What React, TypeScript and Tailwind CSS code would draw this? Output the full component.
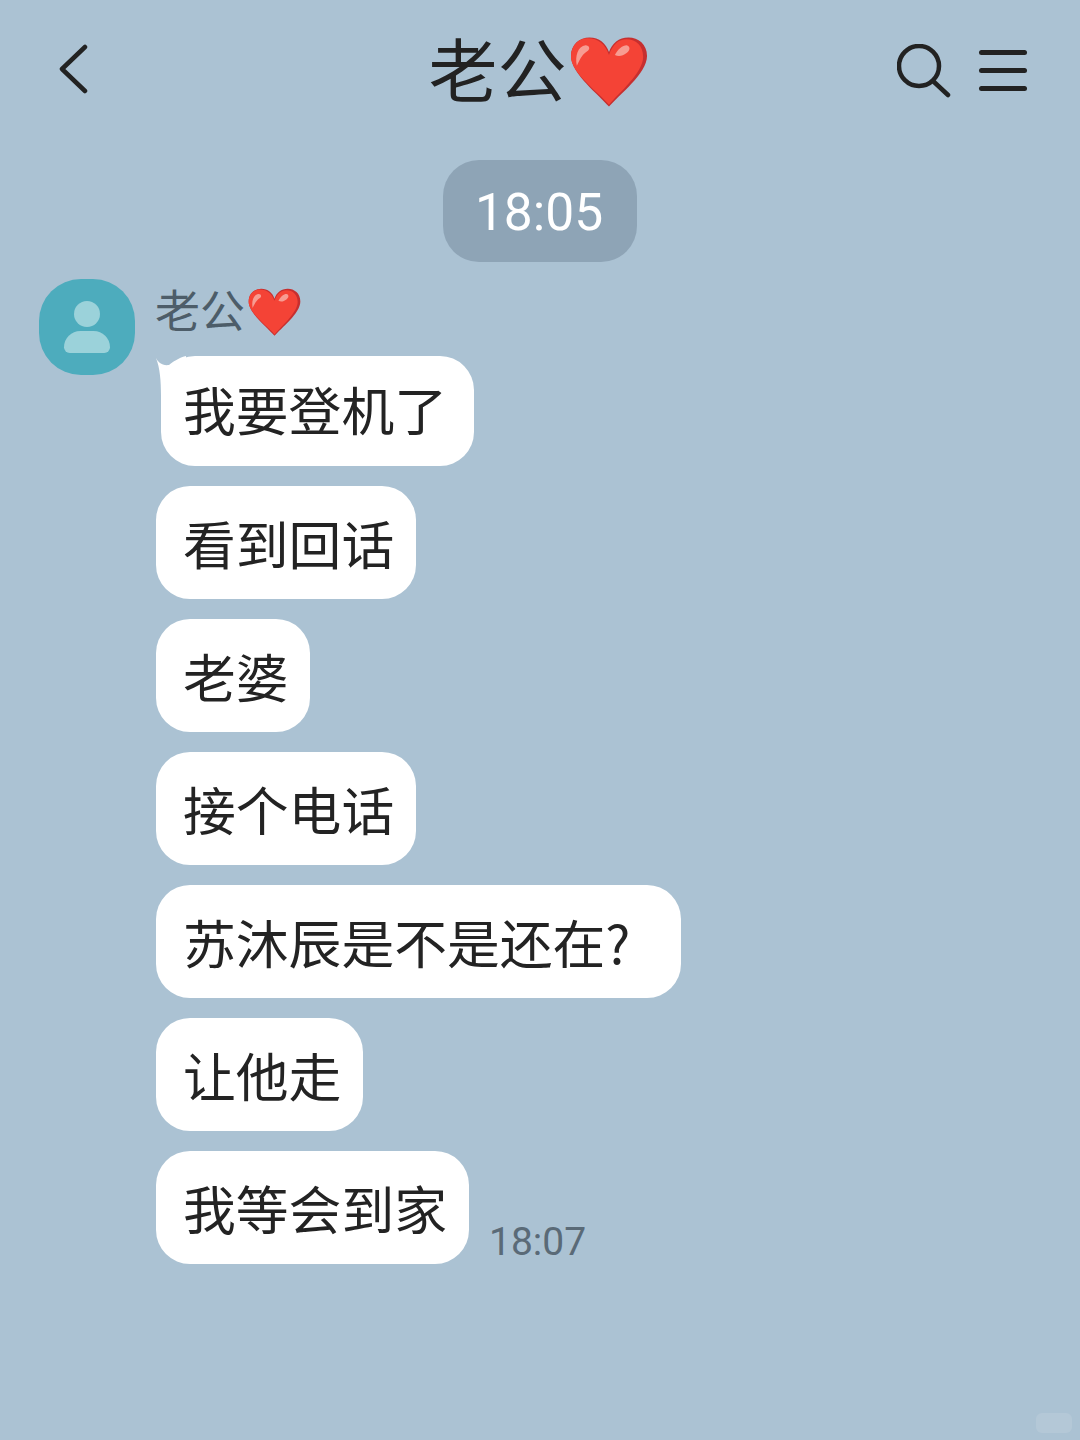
const font = "[font-family:'Noto_Sans_CJK_SC','Noto_Sans',sans-serif]";

function Heart({ className }: { className: string }) {
  return (
    <svg viewBox="0 0 80 72" className={className}>
      <path d="M40 72C30 60 1 38 1 20C1 8 10 1 20 1C30 1 37 7 40 16C43 7 50 1 60 1C70 1 79 8 79 20C79 38 50 60 40 72Z" fill="#c62f2f" />
      <path d="M40 70C30 58 1 37 1 21C1 9 9 2 18 2C29 2 36 8 40 19C44 8 50 3 58 3C68 3 75 10 75 21C75 37 50 58 40 70Z" fill="#f44336" />
      <path d="M7 30C5 20 8 10 16 9C20 9 21 13 18 15C13 18 11 22 7 30Z" fill="#f79c92" />
      <path d="M46 19C49 13 54 9 58 9C62 10 62 14 58 17C54 20 50 21 46 19Z" fill="#f79c92" />
    </svg>
  );
}

const rows: [string, string][] = [
  ["看到回话", "w-[260px]"],
  ["老婆", "w-[154px]"],
  ["接个电话", "w-[260px]"],
  ["苏沐辰是不是还在?", "w-[525px]"],
  ["让他走", "w-[207px]"],
];

function Bubble({ text, width }: { text: string; width: string }) {
  return (
    <div className={`${width} h-[113px] shrink-0 rounded-[34px] bg-white pl-[27px] flex items-center text-[52.8px] leading-none text-[#232323] whitespace-nowrap`}>
      {text}
    </div>
  );
}

export default function App() {
  return (
    <div className={`${font} relative w-[1080px] h-[1440px] overflow-hidden bg-[#abc2d3]`}>
      <header className="grid grid-cols-[1fr_auto_1fr] items-center h-[140px] pl-[59px] pr-[53px]">
        <svg viewBox="0 0 30 50" className="w-[30px] h-[50px] mt-[-3px]" fill="none" stroke="#222" strokeWidth="4.5" strokeLinecap="round" strokeLinejoin="round">
          <path d="M26 3L3 25L26 47" />
        </svg>
        <div className="flex items-center mt-[-6px] ml-[-10px]">
          <span className="text-[69px] leading-none text-[#222]">老公</span>
          <Heart className="w-[78px] h-[71px] mt-[8px] ml-[3px]" />
        </div>
        <div className="flex items-center justify-end gap-[28px]">
          <svg viewBox="0 0 54 54" className="w-[54px] h-[54px] mt-[1px]" fill="none" stroke="#222" strokeWidth="4.5" strokeLinecap="round">
            <circle cx="22" cy="22" r="20" />
            <path d="M36 37L51 51" />
          </svg>
          <div className="flex flex-col gap-[13px] w-[48px]">
            <div className="h-[5px] rounded-full bg-[#222]" />
            <div className="h-[5px] rounded-full bg-[#222]" />
            <div className="h-[5px] rounded-full bg-[#222]" />
          </div>
        </div>
      </header>

      <div className="flex justify-center mt-[20px]">
        <div className="w-[194px] h-[102px] pt-[3px] pr-[2px] rounded-[36px] bg-[#8ea4b6] flex items-center justify-center text-[51.5px] leading-none text-white font-normal [font-family:Roboto,sans-serif]">
          18:05
        </div>
      </div>

      <div className="flex mt-[17px] pl-[39px] gap-[21px]">
        <div className="w-[96px] h-[96px] shrink-0 rounded-[42px] bg-[#4dacbd] flex flex-col items-center pt-[22px]">
          <div className="w-[26px] h-[26px] rounded-full bg-[#9bd2da]" />
          <div className="w-[46px] h-[22px] mt-[4px] rounded-t-[23px] rounded-b-[8px] bg-[#9bd2da]" />
        </div>
        <div className="flex flex-col">
          <div className="flex items-center h-[64px] mt-[-3px]">
            <span className="text-[45px] leading-none text-[#4d5d69] ml-[-1px]">老公</span>
            <Heart className="w-[53px] h-[48px] mt-[8px] ml-[3px]" />
          </div>
          <div className="relative mt-[16px] ml-[5px] w-[313px] h-[110px] rounded-[34px] bg-white pl-[22px] pb-[6px] flex items-center text-[52.8px] leading-none text-[#232323] whitespace-nowrap">
            <svg viewBox="0 0 30 40" className="absolute left-[-5px] top-0 w-[30px] h-[40px]">
              <path d="M0 2C2 6 6 10 13 9C17 6 22 2 30 0L30 40L5 40C5 25 4 12 0 2Z" fill="#fff" />
            </svg>
            <span className="relative">我要登机了</span>
          </div>
          <div className="flex flex-col gap-[20px] mt-[20px]">
            {rows.map(([t, w]) => (
              <Bubble key={t} text={t} width={w} />
            ))}
            <div className="flex items-end gap-[20px]">
              <Bubble text="我等会到家" width="w-[313px]" />
              <span className="text-[39px] leading-none text-[#5a6a77] pb-[2px] [font-family:Roboto,sans-serif] font-normal">18:07</span>
            </div>
          </div>
        </div>
      </div>

      <div className="absolute left-[1036px] top-[1413px] w-[36px] h-[20px] rounded-[6px] bg-[#b4c8d7]" />
    </div>
  );
}
